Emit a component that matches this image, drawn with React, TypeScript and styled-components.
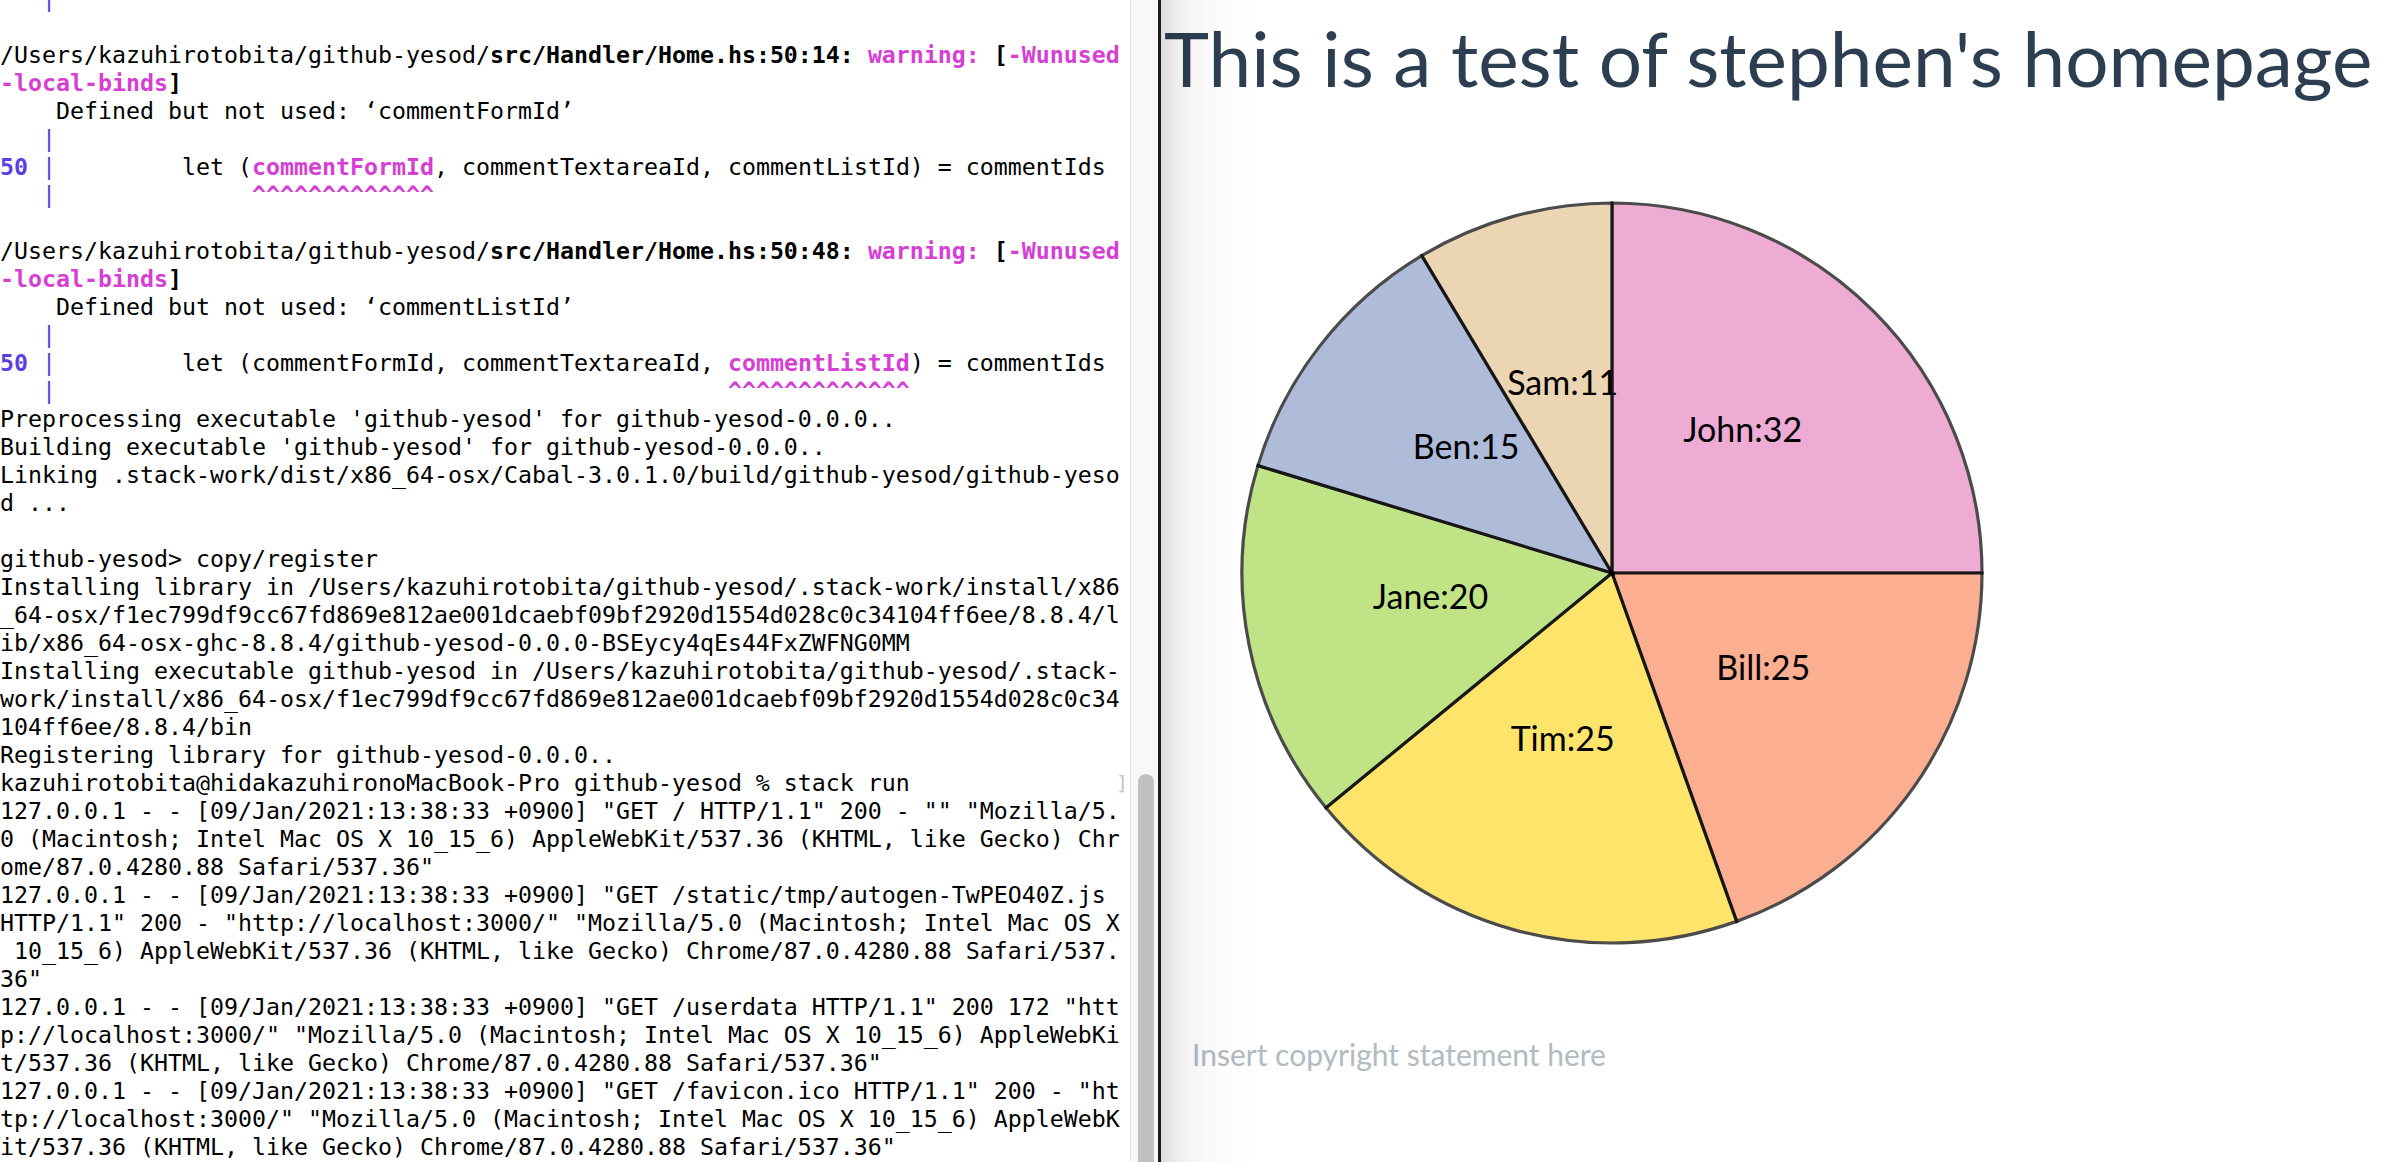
import React from "react";
import styled, { createGlobalStyle } from "styled-components";

const Global = createGlobalStyle`
  html, body { margin: 0; padding: 0; background: #ffffff; }
  body { overflow: hidden; }
  #root { width: 2406px; height: 1162px; }
`;

const Screen = styled.div`
  display: flex;
  width: 2406px;
  height: 1162px;
  overflow: hidden;
  background: #ffffff;
`;

const TerminalPane = styled.div`
  width: 1130px;
  flex: none;
  height: 100%;
  overflow: hidden;
  background: #ffffff;
  color: #000000;
  font-family: "DejaVu Sans Mono", "Liberation Mono", monospace;
  font-size: 23.26px;
  line-height: 28px;
`;

const Lines = styled.div`
  margin-top: -15px;
`;

const Line = styled.div`
  position: relative;
  height: 28px;
  white-space: pre;
`;

type Tone = "n" | "b" | "p" | "u" | "ub";

const Seg = styled.span<{ $tone: Tone }>`
  font-weight: ${(p) => (p.$tone === "b" || p.$tone === "p" || p.$tone === "ub" ? 700 : 400)};
  color: ${(p) =>
    p.$tone === "p" ? "#d53fd3" : p.$tone === "u" || p.$tone === "ub" ? "#5a3fe4" : "#000000"};
`;

const Mark = styled.span`
  position: absolute;
  left: 1116px;
  top: 0;
  color: #c4c4c4;
  font-weight: 300;
  font-size: 20px;
`;

const ScrollTrack = styled.div`
  width: 27px;
  flex: none;
  height: 100%;
  background: #f8f8f8;
  border-left: 1px solid #e4e4e4;
  display: flex;
  flex-direction: column;
  justify-content: flex-end;
  align-items: flex-start;
`;

const Thumb = styled.div`
  margin-left: 7px;
  width: 16px;
  height: 388px;
  background: #c1c1c1;
  border-radius: 8px 8px 0 0;
`;

const BrowserPane = styled.div`
  position: relative;
  flex: 1;
  height: 100%;
  border-left: 3px solid #1c1c1c;
  background: #ffffff;
  padding-left: 3px;
  box-sizing: border-box;
  font-family: Lato, "Open Sans", sans-serif;
  &::before {
    content: "";
    position: absolute;
    left: 0;
    top: 0;
    bottom: 0;
    width: 95px;
    pointer-events: none;
    background: linear-gradient(
      to right,
      rgba(0, 0, 0, 0.14) 0px,
      rgba(0, 0, 0, 0.06) 18px,
      rgba(0, 0, 0, 0.02) 50px,
      rgba(0, 0, 0, 0) 95px
    );
  }
`;

const Title = styled.h1`
  margin: 0;
  padding-top: 11px;
  height: 95px;
  font-size: 76.5px;
  line-height: 92px;
  font-weight: 400;
  color: #2c3e50;
  white-space: nowrap;
`;

const ChartBox = styled.div`
  margin-top: 87px;
  margin-left: 68px;
  width: 760px;
  height: 760px;
`;

const ChartSvg = styled.svg`
  display: block;
`;

const SliceLabel = styled.text`
  font-family: Lato, "Open Sans", sans-serif;
  font-size: 34px;
  fill: #000000;
`;

const Footer = styled.footer`
  margin-top: 83px;
  margin-left: 28px;
  font-size: 30px;
  line-height: 36px;
  color: #b2bac2;
`;

type S = [string, Tone?];

const bar: S = ["   |", "u"];

const lines: S[][] = [
  [bar],
  [],
  [
    ["/Users/kazuhirotobita/github-yesod/"],
    ["src/Handler/Home.hs:50:14:", "b"],
    [" "],
    ["warning:", "p"],
    [" "],
    ["[", "b"],
    ["-Wunused", "p"],
  ],
  [["-local-binds", "p"], ["]", "b"]],
  [["    Defined but not used: \u2018commentFormId\u2019"]],
  [bar],
  [
    ["50", "ub"],
    [" |", "u"],
    ["         let ("],
    ["commentFormId", "p"],
    [", commentTextareaId, commentListId) = commentIds"],
  ],
  [bar, ["              "], ["^^^^^^^^^^^^^", "p"]],
  [],
  [
    ["/Users/kazuhirotobita/github-yesod/"],
    ["src/Handler/Home.hs:50:48:", "b"],
    [" "],
    ["warning:", "p"],
    [" "],
    ["[", "b"],
    ["-Wunused", "p"],
  ],
  [["-local-binds", "p"], ["]", "b"]],
  [["    Defined but not used: \u2018commentListId\u2019"]],
  [bar],
  [
    ["50", "ub"],
    [" |", "u"],
    ["         let (commentFormId, commentTextareaId, "],
    ["commentListId", "p"],
    [") = commentIds"],
  ],
  [bar, ["                                                "], ["^^^^^^^^^^^^^", "p"]],
  [["Preprocessing executable 'github-yesod' for github-yesod-0.0.0.."]],
  [["Building executable 'github-yesod' for github-yesod-0.0.0.."]],
  [["Linking .stack-work/dist/x86_64-osx/Cabal-3.0.1.0/build/github-yesod/github-yeso"]],
  [["d ..."]],
  [],
  [["github-yesod> copy/register"]],
  [["Installing library in /Users/kazuhirotobita/github-yesod/.stack-work/install/x86"]],
  [["_64-osx/f1ec799df9cc67fd869e812ae001dcaebf09bf2920d1554d028c0c34104ff6ee/8.8.4/l"]],
  [["ib/x86_64-osx-ghc-8.8.4/github-yesod-0.0.0-BSEycy4qEs44FxZWFNG0MM"]],
  [["Installing executable github-yesod in /Users/kazuhirotobita/github-yesod/.stack-"]],
  [["work/install/x86_64-osx/f1ec799df9cc67fd869e812ae001dcaebf09bf2920d1554d028c0c34"]],
  [["104ff6ee/8.8.4/bin"]],
  [["Registering library for github-yesod-0.0.0.."]],
  [["kazuhirotobita@hidakazuhironoMacBook-Pro github-yesod % stack run"]],
  [['127.0.0.1 - - [09/Jan/2021:13:38:33 +0900] "GET / HTTP/1.1" 200 - "" "Mozilla/5.']],
  [["0 (Macintosh; Intel Mac OS X 10_15_6) AppleWebKit/537.36 (KHTML, like Gecko) Chr"]],
  [['ome/87.0.4280.88 Safari/537.36"']],
  [['127.0.0.1 - - [09/Jan/2021:13:38:33 +0900] "GET /static/tmp/autogen-TwPEO40Z.js ']],
  [['HTTP/1.1" 200 - "http://localhost:3000/" "Mozilla/5.0 (Macintosh; Intel Mac OS X']],
  [[" 10_15_6) AppleWebKit/537.36 (KHTML, like Gecko) Chrome/87.0.4280.88 Safari/537."]],
  [['36"']],
  [['127.0.0.1 - - [09/Jan/2021:13:38:33 +0900] "GET /userdata HTTP/1.1" 200 172 "htt']],
  [['p://localhost:3000/" "Mozilla/5.0 (Macintosh; Intel Mac OS X 10_15_6) AppleWebKi']],
  [['t/537.36 (KHTML, like Gecko) Chrome/87.0.4280.88 Safari/537.36"']],
  [['127.0.0.1 - - [09/Jan/2021:13:38:33 +0900] "GET /favicon.ico HTTP/1.1" 200 - "ht']],
  [['tp://localhost:3000/" "Mozilla/5.0 (Macintosh; Intel Mac OS X 10_15_6) AppleWebK']],
  [['it/537.36 (KHTML, like Gecko) Chrome/87.0.4280.88 Safari/537.36"']],
];

const MARK_ROW = 28;

const data = [
  { name: "John", value: 32, color: "#e78ac3" },
  { name: "Bill", value: 25, color: "#fc8d62" },
  { name: "Tim", value: 25, color: "#ffd92f" },
  { name: "Jane", value: 20, color: "#a6d854" },
  { name: "Ben", value: 15, color: "#8da0cb" },
  { name: "Sam", value: 11, color: "#e5c494" },
];

const CX = 380;
const CY = 380;
const R = 370;

function pt(a: number, r: number): [number, number] {
  return [CX + r * Math.sin(a), CY - r * Math.cos(a)];
}

const PieChart: React.FC = () => {
  const total = data.reduce((s, d) => s + d.value, 0);
  let acc = 0;
  const slices = data.map((d) => {
    const a0 = (acc / total) * Math.PI * 2;
    acc += d.value;
    const a1 = (acc / total) * Math.PI * 2;
    const [x0, y0] = pt(a0, R);
    const [x1, y1] = pt(a1, R);
    const large = a1 - a0 > Math.PI ? 1 : 0;
    const path = `M${CX},${CY}L${x0},${y0}A${R},${R} 0 ${large} 1 ${x1},${y1}Z`;
    const [lx, ly] = pt((a0 + a1) / 2, R / 2);
    return { ...d, path, lx, ly };
  });
  return (
    <ChartSvg width={760} height={760} viewBox="0 0 760 760">
      {slices.map((s) => (
        <path key={s.name} d={s.path} fill={s.color} stroke="#000" strokeWidth={3.2} opacity={0.7} />
      ))}
      {slices.map((s) => (
        <SliceLabel key={s.name + "l"} x={s.lx} y={s.ly} textAnchor="middle">
          {s.name}:{s.value}
        </SliceLabel>
      ))}
    </ChartSvg>
  );
};

export default function App() {
  return (
    <Screen>
      <Global />
      <TerminalPane>
        <Lines>
          {lines.map((segs, i) => (
            <Line key={i}>
              {segs.map(([t, tone], j) => (
                <Seg key={j} $tone={tone ?? "n"}>
                  {t}
                </Seg>
              ))}
              {i === MARK_ROW ? <Mark>]</Mark> : null}
            </Line>
          ))}
        </Lines>
      </TerminalPane>
      <ScrollTrack>
        <Thumb />
      </ScrollTrack>
      <BrowserPane>
        <Title>This is a test of stephen's homepage</Title>
        <ChartBox>
          <PieChart />
        </ChartBox>
        <Footer>Insert copyright statement here</Footer>
      </BrowserPane>
    </Screen>
  );
}
